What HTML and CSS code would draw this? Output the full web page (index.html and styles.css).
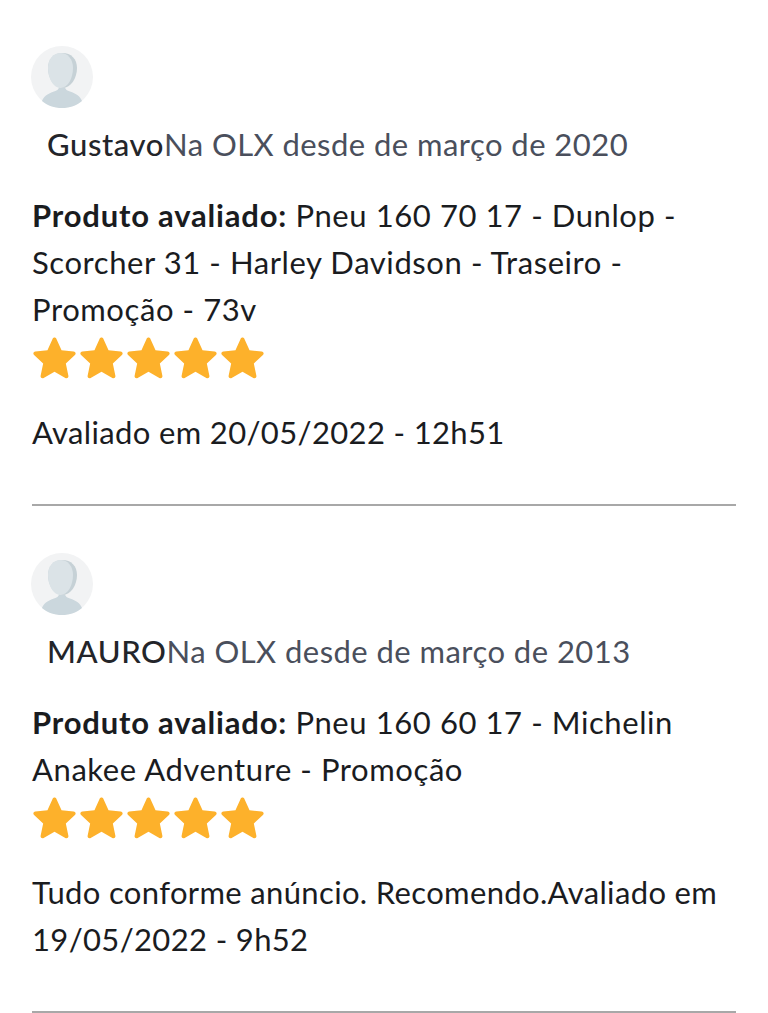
FILE: index.html
```html
<!DOCTYPE html>
<html lang="pt-BR">
<head>
    <meta charset="UTF-8">
    <meta name="viewport" content="width=device-width, initial-scale=1.0">
    <title>Avaliações</title>
    <link rel="stylesheet" href="styles.css">
</head>
<body>

<svg class="defs" width="0" height="0">
    <symbol id="star" viewBox="0 0 44 44">
        <path d="M22 1.500c.9 0 1.600.6 2 1.500l5.200 11.600 12.400 1.300c2 .2 2.700 2.300 1.300 3.600l-9.300 8.600 2.600 12.600c.4 1.900-1.500 3.200-3.100 2.200L22 36.500l-11.100 6.400c-1.600 1-3.500-.3-3.100-2.200l2.600-12.600-9.300-8.600c-1.400-1.300-.7-3.400 1.300-3.600l12.400-1.300L20 3c.4-.9 1.100-1.500 2-1.500z" fill="#fdb12b"/>
    </symbol>
    <symbol id="avatar" viewBox="0 0 62 62">
        <circle cx="31" cy="31" r="31" fill="#f2f3f4"/>
        <path d="M11 55c1.500-4.500 6-7.500 12-9.500 3-1 4.500-2 5-4h6c.5 2 2 3 5 4 6 2 10.500 5 12 9.500-5 4.500-12.500 7-20 7s-15-2.500-20-7z" fill="#cbd7dd"/>
        <path d="M17 22c0-9 6-15 14.500-15S46 13 46 22c0 10-6 20-14.500 20S17 32 17 22z" fill="#c6d1d6"/>
        <path d="M17 22c0-9 5.500-15 12.500-15S42 13 42 22c0 10-5 20-12.500 20S17 32 17 22z" fill="#dbe3e7"/>
    </symbol>
</svg>

<div class="review">
    <svg class="avatar"><use href="#avatar"/></svg>
    <p class="user"><span class="user-name">Gustavo</span>Na OLX desde de março de 2020</p>
    <p class="product"><strong>Produto avaliado:</strong> Pneu 160 70 17 - Dunlop - Scorcher 31 - Harley Davidson - Traseiro - Promoção - 73v</p>
    <div class="stars">
        <svg class="star"><use href="#star"/></svg>
        <svg class="star"><use href="#star"/></svg>
        <svg class="star"><use href="#star"/></svg>
        <svg class="star"><use href="#star"/></svg>
        <svg class="star"><use href="#star"/></svg>
    </div>
    <p class="comment">Avaliado em 20/05/2022 - 12h51</p>
</div>

<div class="review">
    <svg class="avatar"><use href="#avatar"/></svg>
    <p class="user"><span class="user-name">MAURO</span>Na OLX desde de março de 2013</p>
    <p class="product"><strong>Produto avaliado:</strong> Pneu 160 60 17 - Michelin Anakee Adventure - Promoção</p>
    <div class="stars">
        <svg class="star"><use href="#star"/></svg>
        <svg class="star"><use href="#star"/></svg>
        <svg class="star"><use href="#star"/></svg>
        <svg class="star"><use href="#star"/></svg>
        <svg class="star"><use href="#star"/></svg>
    </div>
    <p class="comment">Tudo conforme anúncio. Recomendo.Avaliado em 19/05/2022 - 9h52</p>
</div>

</body>
</html>
```

FILE: styles.css
```css
body {
    margin: 0;
    background: #fff;
    color: #1a1c1f;
    font-family: Lato, "Open Sans", sans-serif;
    font-size: 31px;
    line-height: 47px;
    overflow: hidden;
}
.defs {
    position: absolute;
}
.review {
    margin: 0 32px;
    padding-top: 46px;
    height: 458px;
    border-bottom: 2px solid #a8a8a8;
}
.review + .review {
    padding-top: 47px;
}
.avatar {
    display: block;
    width: 62px;
    height: 62px;
    margin-left: -1px;
}
.user {
    margin: 13px 0 0 15px;
    color: #4a4f5c;
    letter-spacing: .45px;
}
.user-name {
    color: #23252a;
    font-weight: 500;
    letter-spacing: .6px;
}
.product {
    margin: 24px 0 0;
    letter-spacing: .58px;
}
.product strong {
    letter-spacing: .8px;
}
.stars {
    display: flex;
    gap: 4px;
    height: 43px;
    margin: 3px 0 0 1px;
}
.star {
    display: block;
    width: 43px;
    height: 43px;
}
.comment {
    margin: 30px 0 0;
    letter-spacing: .35px;
}
```
